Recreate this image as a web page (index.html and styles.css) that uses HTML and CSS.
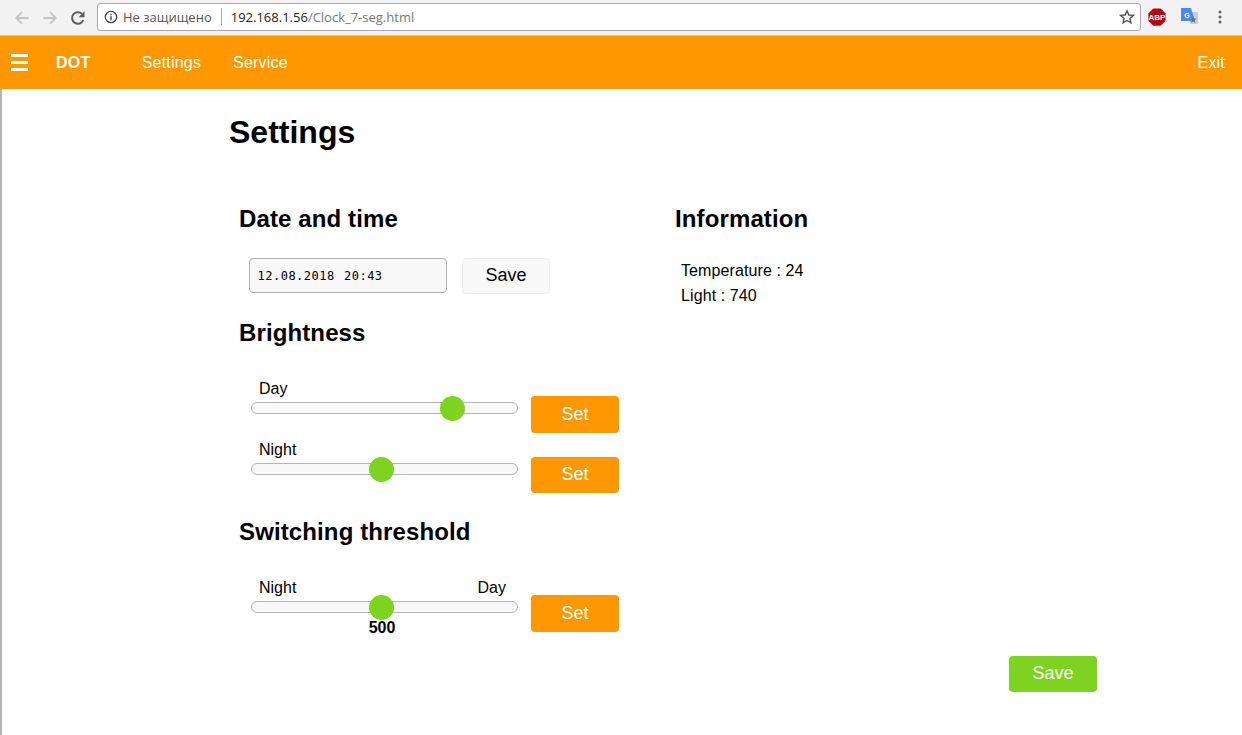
FILE: index.html
```html
<!DOCTYPE html>
<html lang="en">
<head>
<meta charset="utf-8">
<title>Settings</title>
<link rel="stylesheet" href="styles.css">
</head>
<body>
<div class="browser">
  <svg class="tb-icon back" width="18" height="18" viewBox="0 0 18 18"><path d="M15.5 9H3.5M9 3.2 3.2 9 9 14.8" fill="none" stroke="#c4c4c4" stroke-width="1.9"/></svg>
  <svg class="tb-icon fwd" width="18" height="18" viewBox="0 0 18 18"><path d="M2.5 9h12M9 3.2 14.8 9 9 14.8" fill="none" stroke="#c4c4c4" stroke-width="1.9"/></svg>
  <svg class="tb-icon reload" width="18" height="18" viewBox="0 0 18 18"><path d="M14.2 11.2A5.8 5.8 0 1 1 13 4.9" fill="none" stroke="#5c5c5c" stroke-width="2"/><path d="M15.5 2.2v6h-6z" fill="#5c5c5c"/></svg>
  <div class="address">
    <svg class="info" width="14" height="14" viewBox="0 0 14 14"><circle cx="7" cy="7" r="5.7" fill="none" stroke="#444" stroke-width="1.3"/><path d="M6.3 6.2h1.4v4H6.3zM6.3 3.8h1.4v1.4H6.3z" fill="#444"/></svg>
    <span class="secure">Не защищено</span>
    <span class="sep"></span>
    <span class="url"><span class="host">192.168.1.56</span>/Clock_7-seg.html</span>
    <svg class="star" width="16" height="16" viewBox="0 0 16 16"><path d="M8 1.8 9.8 6l4.6.4-3.5 3 1.1 4.5L8 11.5l-4 2.4 1.1-4.5-3.5-3L6.200 6z" fill="none" stroke="#555" stroke-width="1.4"/></svg>
  </div>
  <svg class="ext abp" width="18" height="18" viewBox="0 0 18 18"><path d="M5.400 .5h7.200l5 5v7.200l-5 5H5.400l-5-5V5.500z" fill="#b5070f"/><text x="9" y="12" text-anchor="middle" class="abp-text">ABP</text></svg>
  <svg class="ext gt" width="20" height="20" viewBox="0 0 20 20"><path d="M8 5h10v12H10z" fill="#c9ced6"/><path d="M1 1h10l4 13H1z" fill="#4a8af0"/><text x="7" y="10.500" text-anchor="middle" class="gt-text">G</text><path d="M13 9l1 2.500 2.500.2-2 1.600.8 2.600-2.300-1.400-2 1.400z" fill="#5f6f86"/></svg>
  <svg class="menu-dots" width="4" height="14" viewBox="0 0 4 14"><circle cx="2" cy="2" r="1.500" fill="#666"/><circle cx="2" cy="7" r="1.500" fill="#666"/><circle cx="2" cy="12" r="1.500" fill="#666"/></svg>
</div>

<nav class="nav">
  <div class="burger"><span></span><span></span><span></span></div>
  <span class="brand">DOT</span>
  <a class="nav-link settings-link">Settings</a>
  <a class="nav-link service-link">Service</a>
  <a class="nav-link exit-link">Exit</a>
</nav>

<main class="page">
  <h1 class="title">Settings</h1>
  <div class="columns">
    <div class="col-left">
      <h2 class="heading">Date and time</h2>
      <div class="date-row">
        <input class="date-input" type="text" value="12.08.2018 20:43">
        <button class="btn btn-light">Save</button>
      </div>
      <h2 class="heading brightness">Brightness</h2>
      <div class="slider-row first">
        <div class="slider-col">
          <div class="labels"><span>Day</span></div>
          <input class="range" type="range" min="0" max="1023" value="800">
        </div>
        <button class="btn btn-orange">Set</button>
      </div>
      <div class="slider-row second">
        <div class="slider-col">
          <div class="labels"><span>Night</span></div>
          <input class="range" type="range" min="0" max="1023" value="500">
        </div>
        <button class="btn btn-orange short">Set</button>
      </div>
      <h2 class="heading threshold">Switching threshold</h2>
      <div class="slider-row third">
        <div class="slider-col">
          <div class="labels"><span>Night</span><span>Day</span></div>
          <input class="range" type="range" min="0" max="1023" value="500">
          <div class="value">500</div>
        </div>
        <button class="btn btn-orange">Set</button>
      </div>
    </div>
    <div class="col-right">
      <h2 class="heading">Information</h2>
      <div class="info-list">
        <div>Temperature : 24</div>
        <div>Light : 740</div>
      </div>
    </div>
  </div>
  <div class="footer">
    <button class="btn btn-green">Save</button>
  </div>
</main>
</body>
</html>
```
FILE: styles.css
```css
* { box-sizing: border-box; }
html, body { margin: 0; padding: 0; height: 100%; overflow: hidden; }
body { font-family: "Liberation Sans", Arial, sans-serif; font-size: 16px; color: #000; background: #fff; }

.browser { height: 36px; background: #f2f2f2; border-bottom: 1px solid #c8c8c8; display: flex; align-items: center; padding-left: 13px; }
.tb-icon { flex: none; }
.fwd { margin-left: 10px; }
.reload { margin-left: 10px; }
.address { margin-left: 10px; width: 1044px; height: 28px; margin-top: -2px; background: #fff; border: 1px solid #aaa; border-radius: 3px; display: flex; align-items: center; padding-left: 6px; font-family: "Open Sans", sans-serif; font-size: 13px; }
.info { flex: none; }
.secure { margin-left: 5px; color: #555; white-space: nowrap; }
.sep { width: 1px; height: 17px; background: #aaa; margin-left: 9px; }
.url { margin-left: 9px; color: #777; white-space: nowrap; }
.host { color: #222; }
.star { margin-left: auto; margin-right: 5px; flex: none; }
.ext { flex: none; margin-top: -2px; }
.abp { margin-left: 7px; }
.abp-text { font-family: "Liberation Sans", sans-serif; font-size: 8px; font-weight: 700; fill: #fff; }
.gt { margin-left: 14px; }
.gt-text { font-family: "Liberation Sans", sans-serif; font-size: 7px; font-weight: 700; fill: #fff; }
.menu-dots { margin-left: 18px; margin-top: -2px; flex: none; }

.nav { height: 53px; background: #ff9800; color: #fff; display: flex; align-items: center; padding: 0 17px 0 11px; }
.burger { width: 17px; display: flex; flex-direction: column; gap: 4px; }
.burger span { display: block; height: 3px; background: #fff; }
.brand { font-weight: 700; margin-left: 28px; letter-spacing: .3px; }
.nav-link { color: #fff; letter-spacing: .2px; }
.settings-link { margin-left: 51px; }
.service-link { margin-left: 32px; }
.exit-link { margin-left: auto; }

.page { height: 646px; border-left: 2px solid #b4b4b4; padding-left: 227px; }
.title { margin: 0; padding-top: 25px; font-size: 32px; line-height: 36px; font-weight: 700; }
.columns { display: flex; margin-top: 55px; }
.col-left { width: 446px; padding-left: 10px; }
.col-right { flex: 1; }
.heading { margin: 0; font-size: 24px; line-height: 28px; font-weight: 700; letter-spacing: .12px; }
.date-row { display: flex; align-items: flex-start; margin: 25px 0 0 10px; }
.date-input { width: 198px; height: 35px; padding: 1px 8px 0 7.500px; border: 1px solid #b0b0b0; border-radius: 4px; background: #f8f8f8; font-family: "DejaVu Sans Mono", monospace; font-size: 12px; letter-spacing: .5px; word-spacing: 1.500px; color: #000; outline: 0; }
.btn { width: 88px; height: 37px; border: 0; border-radius: 4px; padding: 0 0 1px; font-family: "Liberation Sans", Arial, sans-serif; font-size: 18px; }
.btn-light { height: 36px; margin-left: 15px; background: #f8f8f8; border: 1px solid #eee; color: #000; }
.btn-orange { background: #ff9800; color: #fff; margin: 18px 0 0 13px; }
.btn-orange.short { height: 36px; }
.btn-green { height: 36px; background: #7ed321; color: #fff; }
.brightness { margin-top: 25px; }
.slider-row { display: flex; align-items: flex-start; margin-left: 12px; }
.slider-row.first { margin-top: 31px; }
.slider-row.second { margin-top: 6px; }
.slider-row.third { margin-top: 32px; }
.third .btn-orange { margin-top: 17px; }
.threshold { margin-top: 25px; }
.slider-col { width: 267px; }
.labels { display: flex; justify-content: space-between; padding: 1px 12px 0 8px; line-height: 20px; height: 24px; }
.third .labels { height: 23px; padding-top: 0; }
.range { display: block; width: 267px; height: 12px; margin: 0; -webkit-appearance: none; appearance: none; background: #f8f8f8; border: 1px solid #b5b5b5; border-radius: 6px; outline: 0; }
.range::-webkit-slider-thumb { -webkit-appearance: none; appearance: none; width: 25px; height: 25px; border-radius: 50%; background: #7ed321; }
.value { margin-top: 5px; padding-right: 5px; text-align: center; font-weight: 700; line-height: 20px; }
.info-list { margin: 25px 0 0 6px; line-height: 25px; letter-spacing: .1px; }
.footer { display: flex; justify-content: flex-end; padding-right: 145px; margin-top: 18px; }
```
